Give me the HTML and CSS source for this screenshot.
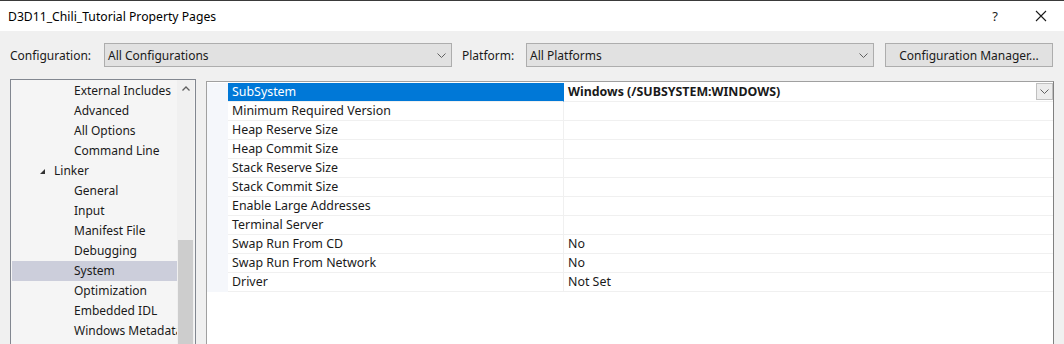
FILE: index.html
```html
<!DOCTYPE html>
<html lang="en">
<head>
<meta charset="UTF-8">
<title>D3D11_Chili_Tutorial Property Pages</title>
<link rel="stylesheet" href="styles.css">
</head>
<body>
<div class="window">
    <div class="titlebar">
        <div class="title">D3D11_Chili_Tutorial Property Pages</div>
        <div class="title-help">?</div>
        <div class="title-close">
            <svg width="12" height="12" viewBox="0 0 12 12"><path d="M1 1 L11 11 M11 1 L1 11" stroke="#1a1a1a" stroke-width="1.1" fill="none"/></svg>
        </div>
    </div>

    <div class="toolbar">
        <span class="tb-label">Configuration:</span>
        <div class="combo combo-config">
            <span>All Configurations</span>
            <svg class="combo-arrow" width="9" height="5" viewBox="0 0 9 5"><path d="M0.5 0.5 L4.5 4.5 L8.5 0.5" stroke="#606060" fill="none"/></svg>
        </div>
        <span class="tb-label tb-platform">Platform:</span>
        <div class="combo combo-platform">
            <span>All Platforms</span>
            <svg class="combo-arrow" width="9" height="5" viewBox="0 0 9 5"><path d="M0.5 0.5 L4.5 4.5 L8.5 0.5" stroke="#606060" fill="none"/></svg>
        </div>
        <div class="btn">Configuration Manager...</div>
    </div>

    <div class="main">
        <div class="tree">
            <div class="tree-items">
                <div class="tree-item child">External Includes</div>
                <div class="tree-item child">Advanced</div>
                <div class="tree-item child">All Options</div>
                <div class="tree-item child">Command Line</div>
                <div class="tree-item parent"><span class="expander"></span>Linker</div>
                <div class="tree-item child">General</div>
                <div class="tree-item child">Input</div>
                <div class="tree-item child">Manifest File</div>
                <div class="tree-item child">Debugging</div>
                <div class="tree-item child selected">System</div>
                <div class="tree-item child">Optimization</div>
                <div class="tree-item child">Embedded IDL</div>
                <div class="tree-item child">Windows Metadata</div>
            </div>
            <div class="scrollbar">
                <div class="scroll-up">
                    <svg width="8" height="5" viewBox="0 0 8 5"><path d="M0.5 4.5 L4 1 L7.5 4.5" stroke="#606060" stroke-width="1.3" fill="none"/></svg>
                </div>
                <div class="scroll-thumb"></div>
            </div>
        </div>

        <div class="props">
            <div class="prop-row selected">
                <div class="prop-gutter"></div>
                <div class="prop-name">SubSystem</div>
                <div class="prop-value bold">Windows (/SUBSYSTEM:WINDOWS)
                    <div class="value-drop">
                        <svg width="9" height="5" viewBox="0 0 9 5"><path d="M0.5 0.5 L4.5 4.5 L8.5 0.5" stroke="#606060" fill="none"/></svg>
                    </div>
                </div>
            </div>
            <div class="prop-row"><div class="prop-gutter"></div><div class="prop-name">Minimum Required Version</div><div class="prop-value"></div></div>
            <div class="prop-row"><div class="prop-gutter"></div><div class="prop-name">Heap Reserve Size</div><div class="prop-value"></div></div>
            <div class="prop-row"><div class="prop-gutter"></div><div class="prop-name">Heap Commit Size</div><div class="prop-value"></div></div>
            <div class="prop-row"><div class="prop-gutter"></div><div class="prop-name">Stack Reserve Size</div><div class="prop-value"></div></div>
            <div class="prop-row"><div class="prop-gutter"></div><div class="prop-name">Stack Commit Size</div><div class="prop-value"></div></div>
            <div class="prop-row"><div class="prop-gutter"></div><div class="prop-name">Enable Large Addresses</div><div class="prop-value"></div></div>
            <div class="prop-row"><div class="prop-gutter"></div><div class="prop-name">Terminal Server</div><div class="prop-value"></div></div>
            <div class="prop-row"><div class="prop-gutter"></div><div class="prop-name">Swap Run From CD</div><div class="prop-value">No</div></div>
            <div class="prop-row"><div class="prop-gutter"></div><div class="prop-name">Swap Run From Network</div><div class="prop-value">No</div></div>
            <div class="prop-row"><div class="prop-gutter"></div><div class="prop-name">Driver</div><div class="prop-value">Not Set</div></div>
        </div>
    </div>
</div>
</body>
</html>
```

FILE: styles.css
```css
body {
    margin: 0;
    padding: 0;
    font-family: 'Noto Sans', 'Open Sans', sans-serif;
    font-size: 12px;
    color: #1a1a1a;
    background-color: #f0f0f0;
}
.window {
    width: 1064px;
    height: 344px;
    overflow: hidden;
    background-color: #f0f0f0;
}
.titlebar {
    height: 30px;
    border-top: 1px solid #3a3a3a;
    background-color: #ffffff;
    display: flex;
    align-items: center;
}
.title {
    flex: 1;
    padding-left: 8px;
    font-size: 12.2px;
    color: #000000;
}
.title-help {
    width: 46px;
    text-align: center;
    font-size: 13px;
    padding-left: 4px;
}
.title-close {
    width: 46px;
    display: flex;
    justify-content: center;
    align-items: center;
}
.toolbar {
    display: flex;
    align-items: center;
    height: 24px;
    margin-top: 12px;
}
.tb-label {
    margin-left: 10px;
    width: 94px;
}
.tb-platform {
    width: 64px;
}
.combo {
    border: 1px solid #adadad;
    background-color: #e1e1e1;
    display: flex;
    align-items: center;
    padding-left: 3px;
    padding-right: 5px;
    box-sizing: border-box;
    height: 24px;
}
.combo span {
    flex: 1;
}
.combo-config {
    width: 348px;
}
.combo-platform {
    width: 348px;
}
.btn {
    margin-left: 11px;
    width: 168px;
    height: 24px;
    box-sizing: border-box;
    border: 1px solid #adadad;
    background-color: #e1e1e1;
    display: flex;
    align-items: center;
    justify-content: center;
}
.main {
    display: flex;
    margin-top: 12px;
    align-items: flex-start;
}
.tree {
    margin-left: 10px;
    width: 186px;
    height: 300px;
    border: 1px solid #828790;
    box-sizing: border-box;
    background-color: #f5f5f5;
    display: flex;
}
.tree-items {
    width: 165px;
    margin-left: 1px;
    padding-top: 1px;
    overflow: hidden;
}
.tree-item {
    height: 20px;
    line-height: 20px;
    white-space: nowrap;
    overflow: hidden;
}
.tree-item.child {
    padding-left: 62px;
}
.tree-item.parent {
    padding-left: 28px;
    display: flex;
    align-items: center;
}
.expander {
    width: 0;
    height: 0;
    border-left: 5px solid transparent;
    border-bottom: 5px solid #333333;
    margin-right: 9px;
}
.tree-item.selected {
    background-color: #cccedb;
}
.scrollbar {
    width: 17px;
    background-color: #f0f0f0;
    display: flex;
    flex-direction: column;
}
.scroll-up {
    height: 17px;
    display: flex;
    align-items: center;
    justify-content: center;
}
.scroll-thumb {
    margin-top: 143px;
    margin-left: 1px;
    width: 15px;
    flex: 1;
    background-color: #cdcdcd;
}
.props {
    margin-left: 10px;
    margin-top: 2px;
    padding-top: 1px;
    width: 848px;
    height: 300px;
    border: 1px solid #a0a0a0;
    border-right-color: #808080;
    box-sizing: border-box;
    background-color: #ffffff;
    font-size: 12.4px;
}
.prop-row {
    display: flex;
    height: 19px;
    line-height: 18px;
}
.prop-gutter {
    width: 21px;
    background-color: #f5f7fb;
}
.prop-name {
    width: 331px;
    padding-left: 4px;
    border-bottom: 1px solid #f0f0f0;
    border-right: 1px solid #f0f0f0;
    white-space: nowrap;
}
.prop-value {
    flex: 1;
    padding-left: 4px;
    border-bottom: 1px solid #f0f0f0;
    display: flex;
    white-space: nowrap;
}
.prop-value.bold {
    font-weight: bold;
}
.prop-row.selected .prop-name {
    background-color: #0078d7;
    color: #ffffff;
    border-right-color: #0078d7;
}
.value-drop {
    margin-left: auto;
    width: 17px;
    height: 17px;
    box-sizing: border-box;
    border: 1px solid #c0c0c0;
    background-color: #ececec;
    display: flex;
    align-items: center;
    justify-content: center;
}
```
